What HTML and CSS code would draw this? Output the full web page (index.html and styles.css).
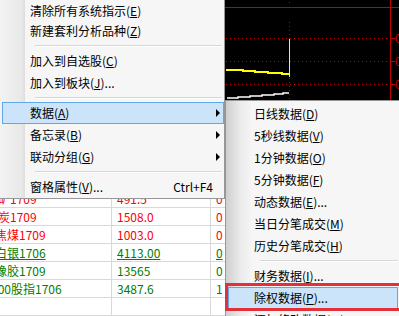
FILE: index.html
```html
<!DOCTYPE html>
<html lang="zh-CN">

<head>
    <meta charset="UTF-8">
    <title>行情 - 右键菜单</title>
    <link rel="stylesheet" href="styles.css">
</head>

<body>
    <div class="screen">
        <div class="quotes">
            <div class="row up"><span class="name wide">铁矿1709</span><span class="price">491.5</span><span class="flag">0</span></div>
            <div class="row up"><span class="name wide">焦炭1709</span><span class="price">1508.0</span><span class="flag">0</span></div>
            <div class="row up"><span class="name">焦煤1709</span><span class="price">1003.0</span><span class="flag">0</span></div>
            <div class="row down current"><span class="name">白银1706</span><span class="price">4113.00</span><span class="flag">0</span></div>
            <div class="row down"><span class="name">橡胶1709</span><span class="price">13565</span><span class="flag">0</span></div>
            <div class="row down"><span class="name index">300股指1706</span><span class="price">3487.6</span><span class="flag">1</span></div>
            <div class="row"><span class="name"></span><span class="price"></span><span class="flag"></span></div>
        </div>

        <div class="chart">
            <svg width="174" height="316" viewBox="0 0 174 316">
                <line x1="0" y1="7.5" x2="174" y2="7.5" stroke="#c40000" />
                <line x1="165.5" y1="0" x2="165.5" y2="316" stroke="#c40000" />
                <g stroke="#c40000" stroke-dasharray="1 3">
                    <line x1="1" y1="38.5" x2="165" y2="38.5" />
                    <line x1="1" y1="61.5" x2="165" y2="61.5" />
                    <line x1="1" y1="84.5" x2="165" y2="84.5" />
                    <line x1="64.5" y1="2" x2="64.5" y2="5" />
                    <line x1="64.5" y1="22" x2="64.5" y2="100" />
                </g>
                <g stroke="#c40000">
                    <line x1="166" y1="38.5" x2="170" y2="38.5" />
                    <line x1="166" y1="61.5" x2="170" y2="61.5" />
                    <line x1="166" y1="84.5" x2="170" y2="84.5" />
                </g>
                <g fill="#c40000" font-size="12" font-family="Liberation Sans, sans-serif">
                    <text x="170" y="43">0</text>
                    <text x="170" y="66">0</text>
                    <text x="170" y="89">0</text>
                </g>
                <line x1="64.5" y1="39" x2="64.5" y2="77" stroke="#9ff" />
                <polyline fill="none" stroke="#ff0" stroke-width="2"
                    points="1,70 18,70 18,71 30,71 30,72 43,72 43,73 57,73 57,74 64,74" />
                <polyline fill="none" stroke="#fff" stroke-width="1.5"
                    points="2,98 13,98 13,97 25,97 25,96 37,96 37,95 49,95 49,94 58,94 58,93 64,93" />
            </svg>
        </div>

        <div class="menu main-menu">
            <div class="item">清除所有系统指示(<u>E</u>)</div>
            <div class="item">新建套利分析品种(<u>Z</u>)</div>
            <div class="sep"></div>
            <div class="item">加入到自选股(<u>C</u>)</div>
            <div class="item">加入到板块(<u>J</u>)...</div>
            <div class="sep"></div>
            <div class="item sub active">数据(<u>A</u>)</div>
            <div class="item sub">备忘录(<u>B</u>)</div>
            <div class="item sub">联动分组(<u>G</u>)</div>
            <div class="sep"></div>
            <div class="item">窗格属性(<u>V</u>)...<span class="key">Ctrl+F4</span></div>
        </div>

        <div class="menu sub-menu">
            <div class="item">日线数据(<u>D</u>)</div>
            <div class="item">5秒线数据(<u>V</u>)</div>
            <div class="item">1分钟数据(<u>O</u>)</div>
            <div class="item">5分钟数据(<u>F</u>)</div>
            <div class="item">动态数据(<u>E</u>)...</div>
            <div class="item">当日分笔成交(<u>M</u>)</div>
            <div class="item">历史分笔成交(<u>H</u>)</div>
            <div class="sep"></div>
            <div class="item">财务数据(<u>I</u>)...</div>
            <div class="item active">除权数据(<u>P</u>)...</div>
            <div class="item">添加修改数据(<u>W</u>)...</div>
        </div>

        <div class="mark"></div>
    </div>
</body>

</html>
```

FILE: styles.css
```css
body {
    margin: 0;
    font-family: "Noto Sans CJK SC", sans-serif;
    font-size: 12px;
    color: #000;
}

.screen {
    position: relative;
    display: flex;
    width: 399px;
    height: 316px;
    overflow: hidden;
}

/* quote list (upper rows sit under the menu) */
.quotes {
    width: 225px;
    flex: none;
    padding-top: 190px;
    background-color: #fff;
}

.row {
    display: grid;
    grid-template-columns: 112px 99px 1fr;
    height: 18px;
    line-height: 17px;
    border-bottom: 1px solid #d9d9d9;
    box-sizing: border-box;
    white-space: nowrap;
}

.row span {
    overflow: hidden;
    border-right: 1px solid #d9d9d9;
}

.row .flag {
    border-right: none;
    padding-left: 5px;
}

.row .price {
    padding-left: 5px;
}

.name {
    text-indent: -5px;
}

.name.wide {
    text-indent: -14px;
}

.name.index {
    text-indent: -9px;
}

.up {
    color: #f00;
}

.down {
    color: #008000;
}

.current span {
    text-decoration: underline;
}

/* chart */
.chart {
    flex: 1;
    background-color: #000;
}

.chart svg {
    display: block;
}

/* context menus */
.menu {
    position: absolute;
    box-sizing: border-box;
    background-color: #f6f6f6;
    border: 1px solid #979797;
}

.menu::before {
    content: "";
    position: absolute;
    top: 0;
    bottom: 0;
    left: 0;
    width: 25px;
    background: linear-gradient(to right, #f3f3f3, #e8e8e8 85%, #dedede);
}

.main-menu {
    left: -1px;
    top: -4px;
    width: 226px;
    padding: 2px 0 0;
}

.main-menu .item:first-child {
    height: 21px;
    line-height: 23px;
}

.sub-menu {
    left: 225px;
    top: 100px;
    width: 176px;
    padding: 2px 0;
}

.sub-menu::before {
    background: linear-gradient(to right, #cfcfcf, #ececec 60%, #f4f4f4);
}

.item {
    position: relative;
    height: 22px;
    line-height: 22px;
    margin-left: 2px;
    padding-left: 28px;
    box-sizing: border-box;
    white-space: nowrap;
}

.sub-menu .item {
    padding-left: 26px;
    margin-right: 2px;
}

.item.active {
    background-color: #cce4fa;
    border: 1px solid #62a8e8;
    line-height: 20px;
    padding-left: 27px;
}

.sub-menu .item.active {
    padding-left: 25px;
}

.item.sub::after {
    content: "";
    position: absolute;
    right: 4px;
    top: 7px;
    border-left: 4px solid #000;
    border-top: 4px solid transparent;
    border-bottom: 4px solid transparent;
}

.item.sub.active::after {
    top: 6px;
    right: 3px;
}

.key {
    position: absolute;
    right: 11px;
}

.sep {
    height: 8px;
    margin-left: 35px;
    margin-right: 2px;
    box-sizing: border-box;
    padding-top: 3px;
}

.sep::after {
    content: "";
    display: block;
    height: 1px;
    border-bottom: 1px solid #fff;
    background-color: #d7d7d7;
}

.sub-menu .sep {
    margin-left: 34px;
}

/* red highlight around the chosen entry */
.mark {
    position: absolute;
    left: 225px;
    top: 283px;
    width: 180px;
    height: 28px;
    box-sizing: border-box;
    border: 3px solid #e3313b;
}
```
